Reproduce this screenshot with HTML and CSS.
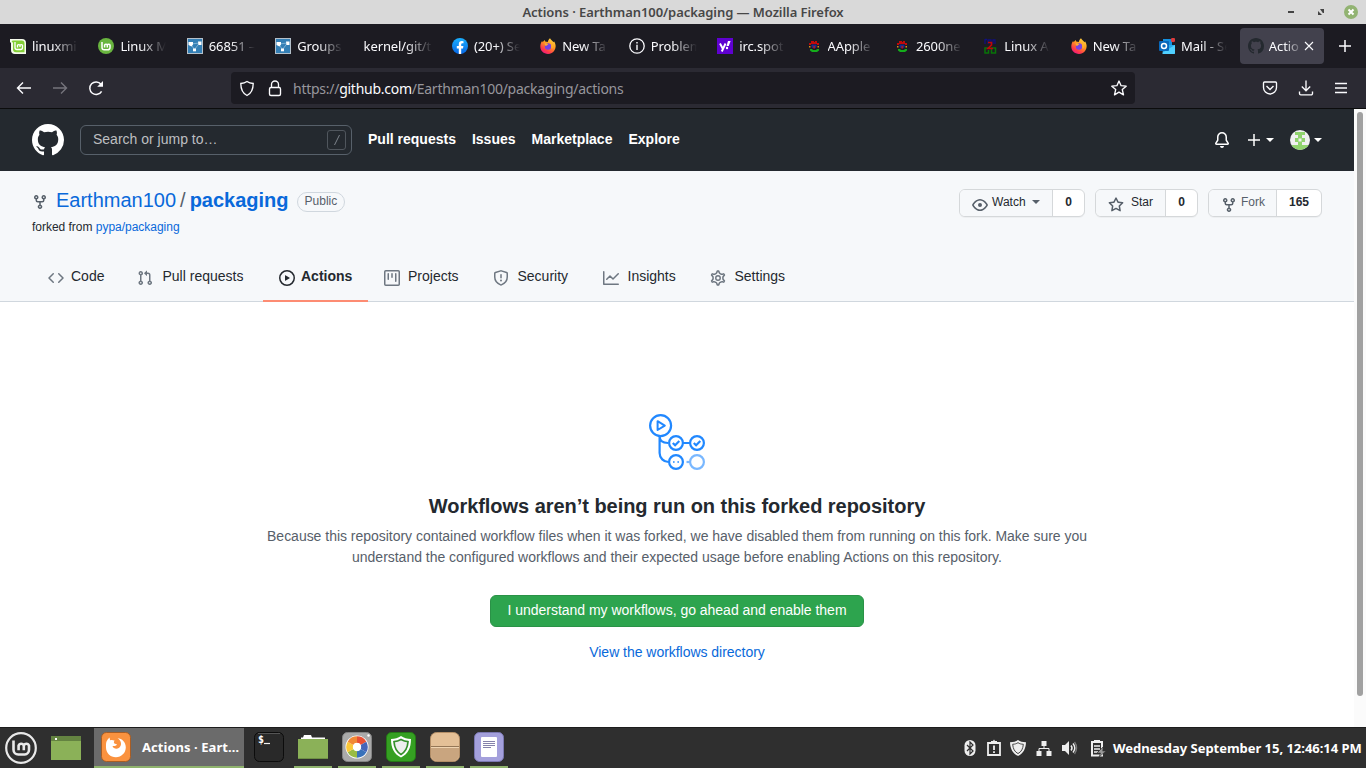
FILE: index.html
```html
<!DOCTYPE html>
<html lang="en">
<head>
<meta charset="utf-8">
<title>Actions · Earthman100/packaging</title>
<link rel="stylesheet" href="styles.css">
</head>
<body>
<svg class="defs" width="0" height="0" aria-hidden="true">
  <defs>
    <linearGradient id="fxg" x1="0.9" y1="0" x2="0.3" y2="1"><stop offset="0" stop-color="#ffe14a"/><stop offset=".45" stop-color="#ff9a1f"/><stop offset=".8" stop-color="#ff3b4a"/><stop offset="1" stop-color="#f0197d"/></linearGradient>
    <linearGradient id="fbg" x1="0" y1="0" x2="0" y2="1"><stop offset="0" stop-color="#19b0ff"/><stop offset="1" stop-color="#0665e4"/></linearGradient>
    <symbol id="i-groups" viewBox="0 0 16 16"><rect width="16" height="16" fill="#b4c0ca"/><rect x="1" y="1" width="14" height="14" fill="#347fb5"/><path d="M3.500 6 7.500 11.500 12.500 5Z" fill="none" stroke="#8dbbdb" stroke-width=".8"/><path d="M1.500 4H6v2.500L4.500 8.500 1.500 7Z" fill="#fff"/><path d="M11 3.500h3.500V7h-3Z" fill="#fff"/><rect x="6" y="10.500" width="3" height="2.800" fill="#fff"/></symbol>
    <symbol id="i-firefox" viewBox="0 0 16 16"><path d="M10 .2c.6 1.500 2.500 2.600 3.500 4.100.4-.3.500-.7.500-1 2 3 2.200 6.200.5 9C13 14.800 10.700 16 8 16 3.600 16 .3 12.700.3 8.600c0-2.200.7-4.300 1.900-5.600.1.600.3 1 .5 1.300C3.300 3.400 4 2.600 4.900 2c0 .7.300 1.300.7 1.700.7.1 1.500 0 2.200.3C8 2.500 8.800 1 10 .2Z" fill="url(#fxg)"/><circle cx="8" cy="8.500" r="3.200" fill="#7542e5"/><path d="M4.500 5.500c1.500-.5 3 0 4 1-1.500.2-1.500 1.500-3 1.500Z" fill="#ffb02e"/><path d="M11 4c2 2 2.500 5 1 7-1-1-.3-4-1-7Z" fill="#ffb42a"/></symbol>
    <symbol id="i-jester" viewBox="0 0 16 16"><path d="M3 5h2V3h3v1h1V3h2v2h2v2h-2V6H5v1H3Z" fill="#c00a0a"/><path d="M5.500 6.500h5V9l-1 1h-3l-1-1Z" fill="#1a2a8c"/><path d="M3 8h1.500v1.500H3zm8.500 0H13v1.500h-1.500z" fill="#d98d14"/><path d="M4 11h2l1 1h3l1-1h2v1.500L11 14H6l-2-1.500Z" fill="#14ad1b"/><path d="M7.300 8h1.800v2.500H7.300Z" fill="#a81c23"/></symbol>
    <symbol id="i-github" viewBox="0 0 16 16"><path fill="currentColor" fill-rule="evenodd" d="M8 0C3.580 0 0 3.580 0 8c0 3.540 2.290 6.530 5.470 7.590.4.070.55-.17.55-.38 0-.19-.01-.82-.01-1.490-2.010.37-2.530-.49-2.690-.94-.09-.23-.48-.94-.82-1.130-.28-.15-.68-.52-.01-.53.63-.01 1.080.58 1.230.82.72 1.210 1.870.87 2.330.66.070-.52.28-.87.51-1.070-1.780-.2-3.640-.89-3.640-3.950 0-.87.31-1.590.82-2.150-.08-.2-.36-1.020.08-2.120 0 0 .67-.21 2.200.82.64-.18 1.320-.27 2-.27s1.360.09 2 .27c1.530-1.040 2.200-.82 2.200-.82.44 1.100.16 1.920.08 2.120.51.56.82 1.270.82 2.150 0 3.070-1.870 3.750-3.650 3.950.29.25.54.73.54 1.480 0 1.070-.01 1.930-.01 2.200 0 .21.15.46.55.38A8.010 8.010 0 0 0 16 8c0-4.420-3.580-8-8-8Z"/></symbol>
    <symbol id="i-fork" viewBox="0 0 16 16"><path fill="currentColor" fill-rule="evenodd" d="M5 3.250a.75.75 0 11-1.500 0 .75.75 0 011.500 0zm0 2.122a2.250 2.250 0 10-1.500 0v.878A2.250 2.250 0 005.750 8.500h1.500v2.128a2.251 2.251 0 101.500 0V8.500h1.500a2.250 2.250 0 002.250-2.250v-.878a2.250 2.250 0 10-1.500 0v.878a.75.75 0 01-.75.75h-4.500A.75.75 0 015 6.250v-.878zm3.750 7.378a.75.75 0 11-1.500 0 .75.75 0 011.500 0zm3-8.750a.75.75 0 100-1.500.75.75 0 000 1.500z"/></symbol>
    <symbol id="i-shield" viewBox="0 0 16 16"><path d="M8 1C6.200 2.300 4 2.900 1.800 3c0 5.800 1.800 9.800 6.200 12 4.400-2.200 6.200-6.200 6.200-12C12 2.900 9.800 2.300 8 1Z"/></symbol>
  </defs>
</svg>

<div class="desktop">
  <header class="titlebar">
    <span class="window-title">Actions · Earthman100/packaging — Mozilla Firefox</span>
    <span class="window-controls">
      <svg width="86" height="24" viewBox="0 0 86 24"><path d="M8 11h6v2H8z" fill="#444"/><path d="M40 9h4v4h-1.200zM38 11v4h4z" fill="#444"/><circle cx="71" cy="12" r="7" fill="#92b372"/><path d="m68.500 9.500 5 5m0-5-5 5" stroke="#fff" stroke-width="2"/></svg>
    </span>
  </header>

  <nav class="tabs">
    <div class="tab"><svg width="16" height="16" viewBox="0 0 16 16"><path d="M0 1h12a4 4 0 0 1 4 4v11H5a4 4 0 0 1-4-4V5L0 4Z" fill="#f4faeb"/><path d="M3 2.500h8.500A3 3 0 0 1 14.500 5.500v8.800H6a3 3 0 0 1-3-3V5L1.500 3Z" fill="#83cf36"/><path d="M5 4v5.500a2 2 0 0 0 2 2h3.500a2 2 0 0 0 2-2V7.300a1.400 1.400 0 0 0-2.500 0V9 7.300a1.400 1.400 0 0 0-2.500 0V9.500" fill="none" stroke="#fff" stroke-width="1.300"/></svg><span>linuxmi</span></div>
    <div class="tab"><svg width="16" height="16" viewBox="0 0 16 16"><circle cx="8" cy="8" r="8" fill="#69b53f"/><path d="M4 4v5.500a2.300 2.300 0 0 0 2.300 2.300h3.500a2.200 2.200 0 0 0 2.200-2.300V7a1.500 1.500 0 0 0-2.700 0v2.500V7a1.500 1.500 0 0 0-2.700 0v2.500" fill="none" stroke="#fff" stroke-width="1.500"/></svg><span>Linux M</span></div>
    <div class="tab"><svg width="16" height="16"><use href="#i-groups"/></svg><span>66851 –</span></div>
    <div class="tab"><svg width="16" height="16"><use href="#i-groups"/></svg><span>Groups</span></div>
    <div class="tab no-icon"><span>kernel/git/t</span></div>
    <div class="tab"><svg width="16" height="16" viewBox="0 0 16 16"><circle cx="8" cy="8" r="8" fill="url(#fbg)"/><path d="M6.800 15.900v-5.500h-2V8h2V6.200c0-2 1.200-3.200 3-3.200l1.700.2v2h-1C9.500 5.200 9.200 5.800 9.200 6.500V8h2.200l-.4 2.400H9.200v5.500Z" fill="#fff"/></svg><span>(20+) Se</span></div>
    <div class="tab"><svg width="16" height="16"><use href="#i-firefox"/></svg><span>New Ta</span></div>
    <div class="tab"><svg width="16" height="16" viewBox="0 0 16 16"><circle cx="8" cy="8" r="7.200" fill="none" stroke="#fbfbfe" stroke-width="1.300"/><path d="M7.300 6.700h1.400V12H7.300zm0-2.700h1.400v1.500H7.300z" fill="#fbfbfe"/></svg><span>Problem</span></div>
    <div class="tab"><svg width="16" height="16" viewBox="0 0 16 16"><rect width="16" height="16" fill="#5f01d1"/><path d="m3 5.500 2.700 5M8.500 5.500 4.800 13.500" stroke="#fff" stroke-width="1.900"/><path d="M11 3h2.600l-1.800 5H9.500Z" fill="#fff"/><circle cx="10" cy="10" r="1.200" fill="#fff"/></svg><span>irc.spot</span></div>
    <div class="tab"><svg width="16" height="16"><use href="#i-jester"/></svg><span>AApple</span></div>
    <div class="tab"><svg width="16" height="16"><use href="#i-jester"/></svg><span>2600ne</span></div>
    <div class="tab"><svg width="16" height="16" viewBox="0 0 16 16"><path d="M3 1v5M3 1.500h2M6 6V2h3v4M11 6V2h2v4" stroke="#10107e" stroke-width="1.300" fill="none"/><path d="M7 10H3v5h3.500v-3M9.500 10h4v5h-4z" stroke="#087408" stroke-width="1.500" fill="none"/><path d="M6 4.500h3.500V7L6 10.500h5" stroke="#bd0808" stroke-width="1.700" fill="none"/></svg><span>Linux Ap</span></div>
    <div class="tab"><svg width="16" height="16"><use href="#i-firefox"/></svg><span>New Ta</span></div>
    <div class="tab"><svg width="16" height="16" viewBox="0 0 16 16"><path d="M4 1h9v9H4z" fill="#1490df"/><path d="M3 7h13v8a1 1 0 0 1-1 1H4Z" fill="#28a8ea"/><path d="m3 15 13-8v8a1 1 0 0 1-1 1H4Z" fill="#50d0ff"/><rect y="3" width="10" height="10" rx="1" fill="#0868ba"/><circle cx="5" cy="8" r="2.500" fill="none" stroke="#fff" stroke-width="1.500"/><circle cx="14" cy="2" r="2.200" fill="#dd3b3b"/></svg><span>Mail - Se</span></div>
    <div class="tab active"><svg class="gh-icon" width="16" height="16"><use href="#i-github"/></svg><span>Actio</span><svg class="close" width="10" height="10" viewBox="0 0 10 10"><path d="m1 1 8 8m0-8-8 8" stroke="#fbfbfe" stroke-width="1.100"/></svg></div>
    <svg class="new-tab" width="12" height="12" viewBox="0 0 12 12"><path d="M6 0v12M0 6h12" stroke="#fbfbfe" stroke-width="1.500"/></svg>
  </nav>

  <div class="toolbar">
    <div class="nav-buttons">
      <svg width="16" height="16" viewBox="0 0 16 16"><path d="M15 8H1.500M7 2.500 1.500 8 7 13.500" fill="none" stroke="#fbfbfe" stroke-width="1.400"/></svg>
      <svg width="16" height="16" viewBox="0 0 16 16"><path d="M1 8h13.500M9 2.500 14.500 8 9 13.500" fill="none" stroke="#75747c" stroke-width="1.400"/></svg>
      <svg width="16" height="16" viewBox="0 0 16 16"><path d="M13.600 11.300A6.300 6.300 0 1 1 13 4.200" fill="none" stroke="#fbfbfe" stroke-width="1.500"/><path d="M15 1v5.800H9.200Z" fill="#fbfbfe"/></svg>
    </div>
    <div class="urlbar">
      <svg width="16" height="17" class="line"><use href="#i-shield"/></svg>
      <svg class="line lock" width="14" height="17" viewBox="0 0 14 17"><rect x="1.500" y="7.500" width="11" height="8" rx="1.500"/><path d="M3.500 7V4.500a3.500 3.500 0 0 1 7 0V7"/></svg>
      <span class="url">https://<b>github.com</b>/Earthman100/packaging/actions</span>
      <svg class="line" width="16" height="16" viewBox="0 0 16 16"><path stroke-linejoin="round" d="m8 1 2.100 4.700 5.100.5-3.900 3.400 1.200 5.200L8 12.100l-4.500 2.700 1.200-5.200L.8 6.200l5.100-.5Z"/></svg>
    </div>
    <div class="tool-icons">
      <svg class="line" width="16" height="16" viewBox="0 0 16 16"><path d="M2.500 2h11c.7 0 1 .4 1 1v4.500a6.500 6.500 0 0 1-13 0V3c0-.6.3-1 1-1Z"/><path d="M4.500 6 8 9.500 11.500 6"/></svg>
      <svg class="line" width="16" height="16" viewBox="0 0 16 16"><path d="M8 .5v10M3.800 6.500 8 10.700l4.200-4.200M1.500 11.500v2a1.300 1.300 0 0 0 1.300 1.300h10.400a1.300 1.300 0 0 0 1.300-1.300v-2"/></svg>
      <svg class="line" width="14" height="14" viewBox="0 0 14 14"><path d="M1 2.500h12M1 7h12M1 11.500h12"/></svg>
    </div>
  </div>

  <div class="viewport">
    <div class="page">
      <header class="gh-header">
        <svg class="gh-logo" width="32" height="32"><use href="#i-github"/></svg>
        <div class="search"><span>Search or jump to…</span><kbd><svg width="8" height="12" viewBox="0 0 8 12"><path d="M1.500 11 6.500 1" stroke="#7e848c" fill="none"/></svg></kbd></div>
        <nav class="gh-nav"><a>Pull requests</a><a>Issues</a><a>Marketplace</a><a>Explore</a></nav>
        <div class="gh-user">
          <svg width="16" height="16" viewBox="0 0 16 16"><path fill="#fff" d="M8 16a2 2 0 001.985-1.750c.017-.137-.097-.25-.235-.25h-3.500c-.138 0-.252.113-.235.25A2 2 0 008 16z"/><path d="M8 .75A4.250 4.250 0 0 0 3.750 5v2.950c0 .2-.06.39-.17.55l-1.700 2.560c-.33.500 0 1.190.64 1.190h10.960c.64 0 .97-.69.64-1.190L12.420 8.500a1 1 0 0 1-.17-.55V5A4.250 4.250 0 0 0 8 .75Z" fill="none" stroke="#fff" stroke-width="1.500"/></svg>
          <span class="add"><svg width="12" height="12" viewBox="0 0 12 12"><path d="M6 0v12M0 6h12" stroke="#fff" stroke-width="1.500"/></svg><i class="caret"></i></span>
          <span class="avatar"><svg width="20" height="20" viewBox="0 0 20 20"><clipPath id="av"><circle cx="10" cy="10" r="10"/></clipPath><g clip-path="url(#av)"><path fill="#f0f0f0" d="M0 0h20v20H0z"/><path fill="#91d36e" d="M5 2h10v3h-3v3h3v4h-3v3h8v5H0v-5h8v-3H5V8h3V5H5Z"/><path fill="#f0f0f0" d="M8.500 8.500h3v3h-3z"/></g></svg><i class="caret"></i></span>
        </div>
      </header>

      <section class="repo-head">
        <div class="repo-top">
          <div class="repo-name">
            <h1><svg width="16" height="16"><use href="#i-fork"/></svg><a class="owner">Earthman100</a><span class="slash">/</span><a class="repo">packaging</a><span class="label">Public</span></h1>
            <p>forked from <a>pypa/packaging</a></p>
          </div>
          <div class="repo-actions">
            <div class="btn-group watch"><span class="btn"><svg width="16" height="16" viewBox="0 0 16 16"><path fill="#57606a" fill-rule="evenodd" d="M1.679 7.932c.412-.621 1.242-1.750 2.366-2.717C5.175 4.242 6.527 3.500 8 3.500c1.473 0 2.824.742 3.955 1.715 1.124.967 1.954 2.096 2.366 2.717a.119.119 0 010 .136c-.412.621-1.242 1.750-2.366 2.717C10.825 11.758 9.473 12.500 8 12.500c-1.473 0-2.824-.742-3.955-1.715C2.920 9.818 2.090 8.690 1.679 8.068a.119.119 0 010-.136zM8 2c-1.981 0-3.670.992-4.933 2.078C1.797 5.169.88 6.423.43 7.100a1.619 1.619 0 000 1.798c.45.678 1.367 1.932 2.637 3.024C4.329 13.008 6.019 14 8 14c1.981 0 3.670-.992 4.933-2.078 1.270-1.091 2.187-2.345 2.637-3.023a1.619 1.619 0 000-1.798c-.45-.678-1.367-1.932-2.637-3.023C11.671 2.992 9.981 2 8 2zm0 8a2 2 0 100-4 2 2 0 000 4z"/></svg><span>Watch</span><i class="caret"></i></span><b>0</b></div>
            <div class="btn-group star"><span class="btn"><svg width="16" height="16" viewBox="0 0 16 16"><path fill="#57606a" fill-rule="evenodd" d="M8 .25a.75.75 0 01.673.418l1.882 3.815 4.210.612a.75.75 0 01.416 1.279l-3.046 2.970.719 4.192a.75.75 0 01-1.088.791L8 12.347l-3.766 1.980a.75.75 0 01-1.088-.79l.72-4.194L.818 6.374a.75.75 0 01.416-1.280l4.210-.611L7.327.668A.75.75 0 018 .25zm0 2.445L6.615 5.500a.75.75 0 01-.564.41l-3.097.45 2.240 2.184a.75.75 0 01.216.664l-.528 3.084 2.769-1.456a.75.75 0 01.698 0l2.770 1.456-.53-3.084a.75.75 0 01.216-.664l2.240-2.183-3.096-.45a.75.75 0 01-.564-.41L8 2.694v.001z"/></svg><span>Star</span></span><b>0</b></div>
            <div class="btn-group forks"><span class="btn"><svg width="16" height="16"><use href="#i-fork"/></svg><span>Fork</span></span><b>165</b></div>
          </div>
        </div>
        <nav class="repo-tabs">
          <a class="t-code"><svg width="16" height="16" viewBox="0 0 16 16"><path d="M5.250 3.750 1 8l4.250 4.250M10.750 3.750 15 8l-4.250 4.250" fill="none" stroke="currentColor" stroke-width="1.500" stroke-linecap="round" stroke-linejoin="round"/></svg><span>Code</span></a>
          <a class="t-pulls"><svg width="16" height="16" viewBox="0 0 16 16"><path fill="currentColor" fill-rule="evenodd" d="M7.177 3.073L9.573.677A.25.25 0 0110 .854v4.792a.25.25 0 01-.427.177L7.177 3.427a.25.25 0 010-.354zM3.750 2.500a.75.75 0 100 1.500.75.75 0 000-1.500zm-2.250.75a2.250 2.250 0 113 2.122v5.256a2.251 2.251 0 11-1.500 0V5.372A2.250 2.250 0 011.500 3.250zM11 2.500h-1V4h1a1 1 0 011 1v5.628a2.251 2.251 0 101.500 0V5A2.500 2.500 0 0011 2.500zm1 10.250a.75.75 0 111.500 0 .75.75 0 01-1.500 0zM3.750 12a.75.75 0 100 1.500.75.75 0 000-1.500z"/></svg><span>Pull requests</span></a>
          <a class="t-actions selected"><svg width="16" height="16" viewBox="0 0 16 16"><circle cx="8" cy="8" r="7.250" fill="none" stroke="currentColor" stroke-width="1.500"/><path fill="currentColor" d="M6.379 5.227A.25.25 0 006 5.442v5.117a.25.25 0 00.379.214l4.264-2.559a.25.25 0 000-.428L6.379 5.227z"/></svg><span>Actions</span></a>
          <a class="t-projects"><svg width="16" height="16" viewBox="0 0 16 16"><g fill="none" stroke="currentColor" stroke-width="1.500" stroke-linecap="round"><rect x=".75" y=".75" width="14.500" height="14.500" rx="1"/><path d="M4.250 3.750v5.500M8 3.750v3.500M11.750 3.750v7.500"/></g></svg><span>Projects</span></a>
          <a class="t-security"><svg width="16" height="16" viewBox="0 0 16 16"><path d="M7.700.85a1 1 0 0 1 .6 0l5.250 1.680a1 1 0 0 1 .7.950V7c0 2.900-1.200 5.900-5.880 7.850a1 1 0 0 1-.74 0C2.950 12.900 1.750 9.900 1.750 7V3.480a1 1 0 0 1 .7-.95Z" fill="none" stroke="currentColor" stroke-width="1.500"/><path d="M8 4.750v3" stroke="currentColor" stroke-width="1.500" stroke-linecap="round"/><circle cx="8" cy="10.500" r="1" fill="currentColor"/></svg><span>Security</span></a>
          <a class="t-insights"><svg width="16" height="16" viewBox="0 0 16 16"><path d="M.75 1.750v12.500h14.500M3.750 9.250 7 6l3 3 5.250-5.250" fill="none" stroke="currentColor" stroke-width="1.500" stroke-linecap="round" stroke-linejoin="round"/></svg><span>Insights</span></a>
          <a class="t-settings"><svg width="16" height="16" viewBox="0 0 16 16"><g fill="none" stroke="currentColor" stroke-width="1.400"><circle cx="8" cy="8" r="2.250"/><path transform="translate(8 8) scale(1.090) translate(-8 -8)" d="M7.429 1.525a6.593 6.593 0 011.142 0c.036.003.108.036.137.146l.289 1.105c.147.56.55.967.997 1.189.174.086.341.183.501.29.417.278.97.423 1.530.27l1.102-.303c.11-.03.175.016.195.046.219.31.41.641.573.989.014.031.022.11-.059.19l-.815.806c-.411.406-.562.957-.53 1.456a4.588 4.588 0 010 .582c-.032.499.119 1.050.53 1.456l.815.806c.08.08.073.159.059.19a6.494 6.494 0 01-.573.99c-.02.029-.086.074-.195.045l-1.103-.303c-.559-.153-1.112-.008-1.529.27-.16.107-.327.204-.5.29-.449.222-.851.628-.998 1.189l-.289 1.105c-.029.11-.101.143-.137.146a6.613 6.613 0 01-1.142 0c-.036-.003-.108-.037-.137-.146l-.289-1.105c-.147-.56-.55-.967-.997-1.189a4.502 4.502 0 01-.501-.29c-.417-.278-.97-.423-1.530-.27l-1.102.303c-.11.03-.175-.016-.195-.046a6.492 6.492 0 01-.573-.989c-.014-.031-.022-.11.059-.19l.815-.806c.411-.406.562-.957.53-1.456a4.587 4.587 0 010-.582c.032-.499-.119-1.050-.53-1.456l-.815-.806c-.08-.08-.073-.159-.059-.19a6.440 6.440 0 01.573-.99c.02-.029.086-.075.195-.045l1.103.303c.559.153 1.112.008 1.529-.27.16-.107.327-.204.5-.29.449-.222.851-.628.998-1.189l.289-1.105c.029-.11.101-.143.137-.146z"/></g></svg><span>Settings</span></a>
        </nav>
      </section>

      <main class="blank">
        <svg width="56" height="56" viewBox="0 0 56 56" fill="none" stroke="#2188ff" stroke-width="2.200">
          <circle cx="11.600" cy="11.600" r="10.500"/>
          <path d="M8.600 7.200v8.800l7.200-4.400Z" stroke-width="2" stroke-linejoin="round"/>
          <path d="M10.600 22v17a9 9 0 0 0 9 9M10.600 22c0 4.500 3 7 8.500 7M34 29h7"/>
          <circle cx="27" cy="29" r="6.900"/><circle cx="48" cy="29" r="6.900"/><circle cx="27" cy="48" r="6.900"/>
          <path d="m23.800 29 2.300 2.300 4.200-4.300M44.800 29l2.300 2.300 4.200-4.300"/><path d="M24 48h1.600M28.400 48h1.600" stroke-width="1.600"/>
          <g opacity=".6"><circle cx="48" cy="48" r="6.900"/><path d="M37.500 48H41"/></g>
        </svg>
        <h3>Workflows aren’t being run on this forked repository</h3>
        <p>Because this repository contained workflow files when it was forked, we have disabled them from running on this fork. Make sure you understand the configured workflows and their expected usage before enabling Actions on this repository.</p>
        <button>I understand my workflows, go ahead and enable them</button>
        <a>View the workflows directory</a>
      </main>
    </div>
    <div class="scrollbar"><div class="thumb"></div></div>
  </div>

  <footer class="panel">
    <svg class="menu" width="32" height="32" viewBox="0 0 32 32"><circle cx="16" cy="16" r="14.800" fill="none" stroke="#e9e9e9" stroke-width="2.200"/><path d="M8.500 8.500v9.200a4.800 4.800 0 0 0 4.800 4.800h6.400a4.800 4.800 0 0 0 4.300-4.800v-4a2.700 2.700 0 0 0-5.200 0v4.500-4.500a2.700 2.700 0 0 0-5.200 0v4.500" fill="none" stroke="#e9e9e9" stroke-width="2.600"/></svg>
    <svg class="show-desktop" width="30" height="24" viewBox="0 0 30 24"><path fill="#8bb158" d="M0 0h30v24H0z"/><path fill="#648341" d="M0 0h30v5H0z"/><path fill="#fff" d="M4 2h2v2H4z"/></svg>
    <div class="task current"><svg width="30" height="30" viewBox="0 0 30 30"><rect x=".5" y=".5" width="29" height="29" rx="5" fill="#fa923f" stroke="#a85d24"/><path d="M5.500 9.500c.8-1.500 1.800-3 3-4l.6 2.700c1.500-.5 3.100-.3 4.600.5-1.600 1.300-.8 3.300 2.300 3.500-1 2-3 1.800-4.500 1.700.8 2.600 4 3.500 6.300 2 2.700-1.700 2.900-5.600.8-8-.6-.7-1.200-1.200-2-1.600 4.400.2 8.200 4 8.200 9 0 5.600-4.400 10-9.900 10S5 21 5 15.500c0-2.200-.2-4 .5-6Z" fill="#fff"/></svg><span>Actions · Eart…</span></div>
    <div class="task terminal"><svg width="30" height="30" viewBox="0 0 30 30"><rect x=".5" y=".5" width="29" height="29" rx="5" fill="#292929" stroke="#0c0c0c"/><path d="M4 1.500h22" stroke="#555"/><path d="M10 11.500h6" stroke="#eee" stroke-width="1.200"/></svg><span class="prompt">$</span></div>
    <div class="task running"><svg width="30" height="30" viewBox="0 0 30 30"><path d="M3 8V5.500h2l1-2.500h7l1 2.500h13V9H3Z" fill="#fff"/><path d="M0 7h30v19a1 1 0 0 1-1 1H1a1 1 0 0 1-1-1Z" fill="#8bb158"/><path d="M1 26.500h28" stroke="#6f9145"/></svg></div>
    <div class="task running"><svg width="30" height="30" viewBox="0 0 30 30"><rect x=".5" y=".5" width="29" height="29" rx="5" fill="#aaa" stroke="#858585"/><circle cx="15" cy="15" r="11.500" fill="#fff"/><g fill="none" stroke-width="6.500"><path d="M15 7.500A7.500 7.500 0 0 1 21.500 11.300" stroke="#e95034"/><path d="M21.500 11.300A7.500 7.500 0 0 1 21.500 18.700" stroke="#4565b8"/><path d="M21.500 18.700A7.500 7.500 0 0 1 15 22.500" stroke="#3972ba"/><path d="M15 22.500A7.500 7.500 0 0 1 8.500 18.700" stroke="#99bc42"/><path d="M8.500 18.700A7.500 7.500 0 0 1 8.500 11.300" stroke="#fbc839"/><path d="M8.500 11.300A7.500 7.500 0 0 1 15 7.500" stroke="#f18935"/></g><circle cx="15" cy="15" r="4" fill="#fff"/><circle cx="26.500" cy="3.500" r="1.200" fill="#fff"/></svg></div>
    <div class="task running"><svg width="30" height="30" viewBox="0 0 30 30"><rect x=".5" y=".5" width="29" height="29" rx="5" fill="#35a022" stroke="#247915"/><path d="M15 4c-3 2-6 3-10 3 0 9 3 15 10 18.500C22 22 25 16 25 7c-4 0-7-1-10-3Z" fill="#fff"/><path d="M15 7.500c-2.300 1.300-4.500 2-7 2.200.4 6.200 2.500 10 7 12.700 4.500-2.700 6.600-6.500 7-12.700-2.500-.2-4.700-.9-7-2.200Z" fill="#eee" stroke="#35902b" stroke-width="1.700"/></svg></div>
    <div class="task running"><svg width="30" height="30" viewBox="0 0 30 30"><rect x=".5" y=".5" width="29" height="29" rx="6" fill="#e4c097" stroke="#b38e67"/><path d="M1 15h28v8a6 6 0 0 1-6 6H7a6 6 0 0 1-6-6Z" fill="#c9a57f"/><path d="M1 14.500h28" stroke="#957757"/><path d="M1 15.500h28" stroke="#f0d4b1"/></svg></div>
    <div class="task running"><svg width="30" height="30" viewBox="0 0 30 30"><rect x=".5" y=".5" width="29" height="29" rx="5" fill="#a4a0dc" stroke="#7b78b2"/><rect x="7" y="5" width="16" height="20" rx="1" fill="#fff"/><path d="M9 9.500h12M9 11.500h12M9 13.500h12M9 15.500h8" stroke="#8582ab"/></svg></div>
    <div class="tray">
      <svg width="16" height="18" viewBox="0 0 16 18"><rect x="2.500" y="1" width="11" height="16" rx="5.500" fill="#eee"/><path d="m5 6 6 6-3 3V3l3 3-6 6" fill="none" stroke="#2f2f2f" stroke-width="1.200"/></svg>
      <svg width="16" height="18" viewBox="0 0 16 18"><path d="M2 4h12v12H2z" fill="none" stroke="#eee" stroke-width="1.800"/><path d="M5 2h2l1-1.500L9 2h2v3H5Z" fill="#eee"/><path d="M8 6.500v4.500M8 12.200v1.800" stroke="#eee" stroke-width="1.800"/></svg>
      <svg width="16" height="18" viewBox="0 0 18 18"><path d="M9 0C6.500 1.700 4 2.500 0 2.500 .3 10 3 15 9 18c6-3 8.700-8 9-15.500C14 2.500 11.500 1.700 9 0Z" fill="#eee"/><path d="M9 3C7.300 4.200 5.500 4.700 3 4.800 3.500 10 5 13 9 15.300c4-2.300 5.500-5.300 6-10.500-2.500-.1-4.300-.6-6-1.800Z" fill="none" stroke="#444" stroke-width="1.100"/></svg>
      <svg class="lan" width="16" height="18" viewBox="0 0 16 18"><path d="M5.500 2h5v5h-5zM.5 12h5v5h-5zM10.500 12h5v5h-5z" fill="#eee"/><path d="M8 7v3M3 12V9.500h10V12" fill="none" stroke="#eee"/></svg>
      <svg class="volume" width="17" height="18" viewBox="0 0 17 18"><path d="M1 6h3l4-4v14l-4-4H1Z" fill="#eee"/><path d="M10 6.500c1.200 1.500 1.200 3.500 0 5M12 4.500c2.200 2.700 2.200 6.300 0 9" fill="none" stroke="#eee" stroke-width="1.500"/><path d="M13.500 3c2.700 3.500 2.700 8.500 0 12" fill="none" stroke="#777" stroke-width="1.400"/></svg>
      <svg class="battery" width="16" height="18" viewBox="0 0 16 18"><path d="M2 3h10v13.500H2z" fill="none" stroke="#eee" stroke-width="2"/><path d="M4 1h6v3H4z" fill="#eee"/><path d="M4 7h6M4 10h6M4 13h4" stroke="#eee" stroke-width="1.300"/><path d="M13 8 7 14h3.500l-1.500 4 7-6h-3.500Z" fill="#999" stroke="#2f2f2f" stroke-width=".6"/></svg>
    </div>
    <span class="clock">Wednesday September 15, 12:46:14 PM</span>
  </footer>
</div>
</body>
</html>
```
FILE: styles.css
```css
* { box-sizing: border-box; }
body { margin: 0; overflow: hidden; font-family: "Liberation Sans", Arial, sans-serif; font-size: 14px; color: #24292f; }
svg { display: block; flex: none; }
h1, h3, p { margin: 0; }
.defs { position: absolute; }
.desktop { display: flex; flex-direction: column; width: 1366px; height: 768px; overflow: hidden; }

.titlebar { display: grid; grid-template-columns: 86px 1fr 86px; align-items: center; height: 24px; background: #d9d9d9; font-family: "Noto Sans", sans-serif; }
.window-title { grid-column: 2; text-align: center; font-size: 13px; font-weight: 600; letter-spacing: -0.07px; color: #474747; line-height: 22px; }

.tabs { display: flex; align-items: center; height: 44px; background: #1c1b22; font-family: "Noto Sans", sans-serif; font-size: 13px; color: #fbfbfe; }
.tab { display: flex; align-items: center; gap: 6px; width: 84.400px; margin: 0 2px; padding: 0 8px; height: 36px; flex: none; border-radius: 4px; }
.tab span { width: 46px; flex: none; white-space: nowrap; letter-spacing: -0.1px; line-height: 20px; -webkit-mask-image: linear-gradient(to right, #000 45%, transparent); mask-image: linear-gradient(to right, #000 45%, transparent); }
.tab.no-icon span { width: 69px; -webkit-mask-image: linear-gradient(to right, #000 60%, transparent); mask-image: linear-gradient(to right, #000 60%, transparent); }
.tab.active { width: 84px; margin-left: 2.400px; background: #42414d; gap: 5px; }
.tab.active span { width: 34px; }
.gh-icon { color: #24292f; }
.tab .close { margin-left: -4px; }
.new-tab { margin-left: 13.600px; }

.toolbar { display: flex; align-items: center; height: 41px; padding-left: 16px; background: #2b2a33; border-bottom: 1px solid #0c0c0d; }
.nav-buttons { display: flex; gap: 20px; width: 215px; }
.line { fill: none; stroke: #fbfbfe; stroke-width: 1.350; }
.urlbar { display: flex; align-items: center; width: 904px; height: 32px; padding: 0 8px; background: #1c1b22; border-radius: 4px; }
.lock { margin-left: 13px; }
.url { flex: 1; margin-left: 11px; font-family: "Noto Sans", sans-serif; font-size: 14px; letter-spacing: -0.26px; color: #97969c; }
.url b { font-weight: 400; color: #fbfbfe; }
.tool-icons { display: flex; align-items: center; gap: 20px; margin-left: 127px; }

.viewport { display: flex; height: 618px; }
.page { width: 1354px; background: #fff; }
.scrollbar { width: 12px; padding: 3px 3px 0; background: #fbfbfb; }
.thumb { width: 6px; height: 584px; border-radius: 3px; background: #a1a1a1; }

.gh-header { display: flex; align-items: center; height: 62px; padding: 0 32px; background: #24292f; color: #fff; }
.search { display: flex; align-items: center; justify-content: space-between; width: 272px; height: 30px; margin: 0 16px; padding: 0 5px 0 12px; border: 1px solid #57606a; border-radius: 6px; color: #bdbfc1; }
.search span { padding-bottom: 2px; }
.search kbd { display: grid; place-items: center; width: 19px; height: 20px; border: 1px solid #50565d; border-radius: 3px; }
.gh-nav { display: flex; flex: 1; gap: 16px; padding-bottom: 2px; font-weight: 700; }
.gh-user { display: flex; align-items: center; gap: 18px; }
.add, .avatar { display: flex; align-items: center; gap: 6px; }
.avatar { gap: 4px; margin-left: -2px; }
.caret { width: 0; height: 0; border: 4px solid transparent; border-top-color: currentColor; border-bottom: 0; }

.repo-head { height: 131px; padding: 18px 32px 0; background: #f6f8fa; border-bottom: 1px solid #d0d7de; }
.repo-top { display: flex; justify-content: space-between; height: 62px; }
.repo-name h1 { display: flex; align-items: center; height: 24px; font-size: 20px; font-weight: 400; color: #57606a; }
.repo-name h1 svg { margin: 2px 8px 0 0; }
.repo-name h1 a, .slash { padding-bottom: 2px; }
.repo-name a { color: #0969da; }
.slash { margin: 0 4px; }
.repo { font-weight: 700; }
.repo-name .label { height: 20px; margin: 2px 0 0 8px; padding: 0 7px; border: 1px solid #d0d7de; border-radius: 10px; font-size: 12px; line-height: 17px; }
.repo-name p { padding-top: 5px; font-size: 12px; line-height: 18px; letter-spacing: -0.02px; }
.repo-actions { display: flex; gap: 10px; }
.btn-group { display: flex; height: 28px; border: 1px solid #d5d8da; border-radius: 6px; background: #fff; font-size: 12px; line-height: 25px; overflow: hidden; box-shadow: 0 1px 0 rgba(27,31,36,.04); }
.btn { display: flex; flex: 1; padding-left: 12px; background: #f6f8fa; border-right: 1px solid #d5d8da; }
.btn svg { margin-top: 7px; color: #57606a; }
.btn span { margin-left: 4px; }
.btn .caret { margin: 10px 0 0 6px; color: #57606a; }
.btn-group b { width: 31px; text-align: center; }
.watch { width: 126px; }
.star { width: 103px; }
.star .btn span { margin-left: 7px; }
.forks { width: 114px; }
.forks .btn { color: #57606a; }
.forks .btn span { margin-left: 4px; }
.forks b { width: 44px; }

.repo-tabs { display: flex; height: 51px; }
.repo-tabs a { display: flex; align-items: center; gap: 8.500px; flex: none; height: 51px; padding: 2px 0 0 16px; }
.repo-tabs svg { color: #6e7781; }
.repo-tabs span { padding-bottom: 3px; }
.repo-tabs .t-code { width: 88.500px; gap: 7px; }
.repo-tabs .t-pulls { width: 142.500px; gap: 10px; }
.repo-tabs .selected { width: 105px; gap: 6px; font-weight: 700; box-shadow: inset 0 -2px #fd8c73; }
.repo-tabs .selected svg { color: #24292f; }
.repo-tabs .t-projects { width: 109px; gap: 8px; }
.repo-tabs .t-security { width: 110px; }
.repo-tabs .t-insights { width: 106.500px; }
.repo-tabs .t-settings { gap: 9px; }

.blank { display: flex; flex-direction: column; align-items: center; padding-top: 112px; text-align: center; }
.blank h3 { margin-top: 21px; font-size: 20px; line-height: 30px; letter-spacing: -0.04px; }
.blank p { width: 830px; margin-top: 5px; line-height: 21px; letter-spacing: -0.02px; color: #57606a; }
.blank button { width: 374px; height: 32px; margin-top: 27px; padding: 0 0 2px; border: 1px solid #2a9247; border-radius: 6px; background: #2da44e; color: #fff; font: 14px "Liberation Sans", Arial, sans-serif; letter-spacing: -0.02px; }
.blank a { margin-top: 15px; line-height: 21px; letter-spacing: -0.03px; color: #0969da; }

.panel { display: flex; align-items: center; height: 41px; padding-left: 5px; background: #2f2f2f; border-top: 1px solid #1d1d1d; font-family: "Noto Sans", sans-serif; font-size: 13px; font-weight: 700; color: #fff; }
.show-desktop { margin: 0 13px 0 14px; }
.task { display: flex; justify-content: center; width: 38px; height: 40px; margin-right: 6px; padding-top: 4px; flex: none; border-bottom: 2px solid transparent; }
.running { border-bottom-color: #8fb36d; }
.task.current { justify-content: flex-start; gap: 11px; width: 150px; padding-left: 7px; background: #6b6b6b; border-bottom-color: #8fb36d; line-height: 31px; }
.current span { white-space: nowrap; letter-spacing: 0.05px; }
.terminal { position: relative; }
.prompt { position: absolute; left: 8px; top: 6px; font: 700 10px "DejaVu Sans Mono", monospace; }
.tray { display: flex; align-items: center; gap: 8px; margin-left: auto; }
.lan { margin-left: 2px; }
.volume { margin-left: 1px; }
.battery { margin-left: 4px; }
.clock { width: 253px; margin-left: 7px; white-space: nowrap; letter-spacing: -0.03px; }
```
